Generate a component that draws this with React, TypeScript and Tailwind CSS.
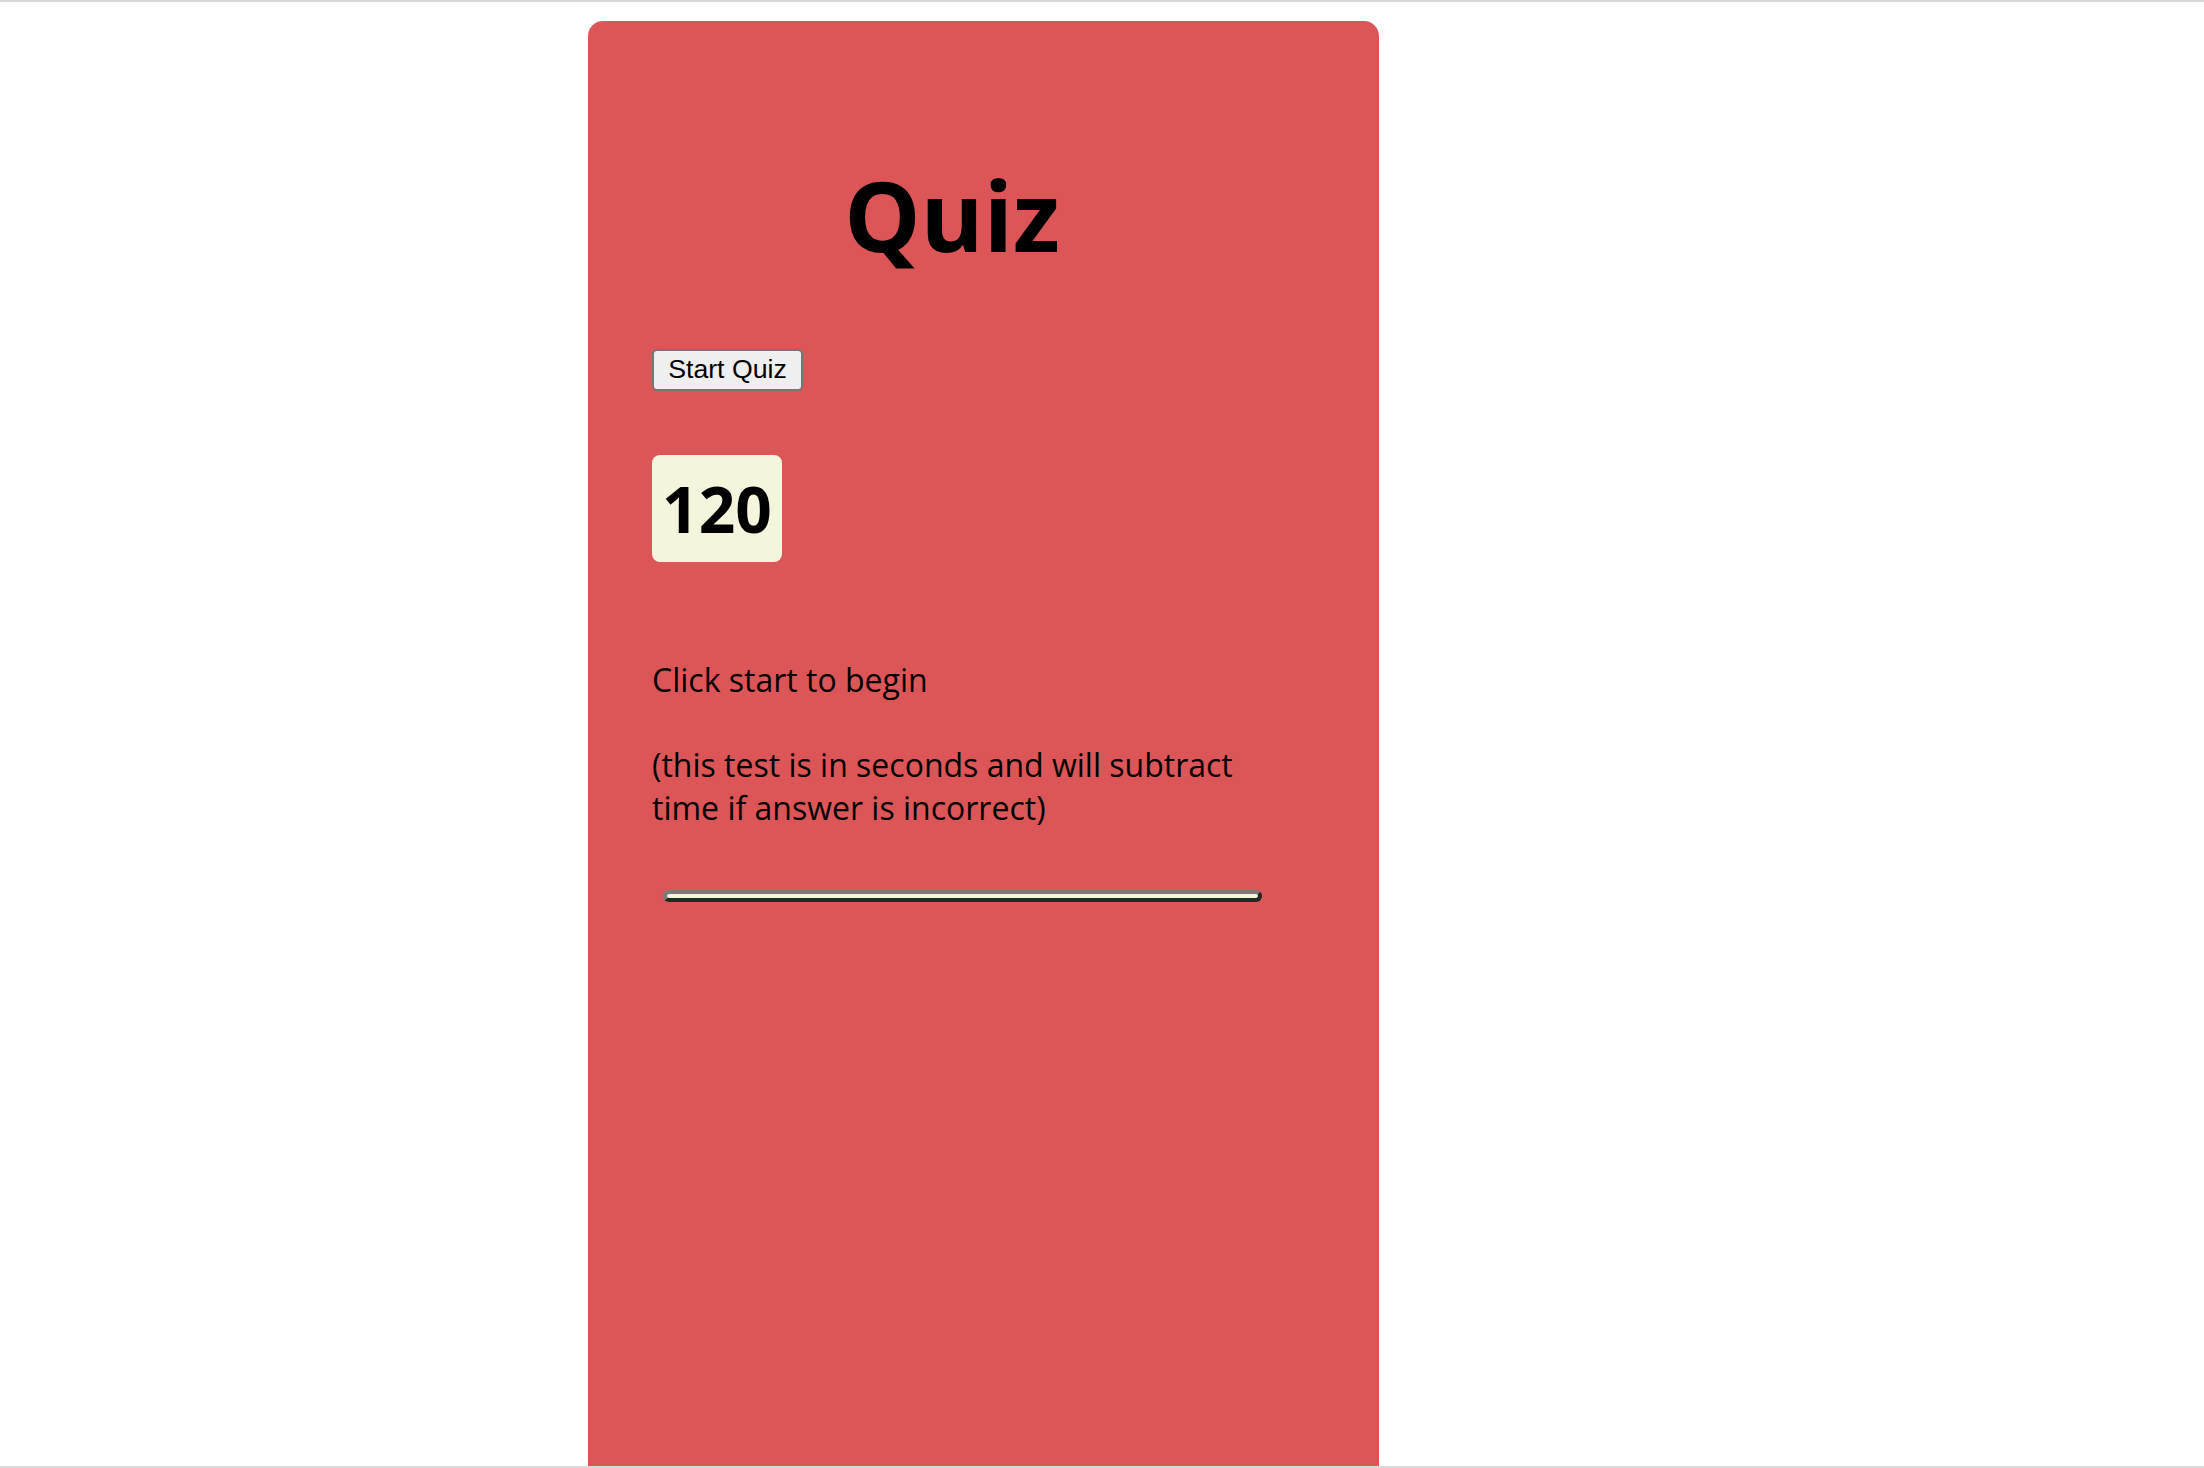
export default function App() {
  return (
    <main className="h-screen w-full overflow-hidden border-t-2 border-b-2 border-[#d9d9d9] bg-white">
      <div className="ml-[588px] mt-[19px] h-[1500px] w-[791px] rounded-[15px] bg-[#dc5557] pl-[64px] text-black [font-family:'Open_Sans',sans-serif]">
        <h1 className="w-[600px] pt-[146px] text-center text-[96px] font-bold leading-[96px]">Quiz</h1>

        <button className="mt-[86px] flex h-[42px] w-[151px] items-center justify-center rounded-[5px] border-2 border-[#767676] bg-[#efefef] pb-[2px] text-[26.67px] leading-none [font-family:'Liberation_Sans',Arial,sans-serif]">
          Start Quiz
        </button>

        <div className="mt-[64px] flex h-[107px] w-[130px] items-center justify-center rounded-[8px] bg-[#f5f4dc]">
          <h2 className="text-[64px] font-bold leading-[64px]">120</h2>
        </div>

        <div className="mt-[96px] w-[600px] text-[32px] leading-[43px]">
          <p>Click start to begin</p>
          <p className="mt-[42px]">(this test is in seconds and will subtract time if answer is incorrect)</p>
        </div>

        <div className="ml-[11px] mt-[61px] h-[12px] w-[599px] rounded-full border-4 border-t-[#7a7a7a] border-l-[#7a7a7a] border-b-[#262626] border-r-[#262626] bg-[#f5f4dc]"></div>
      </div>
    </main>
  );
}
